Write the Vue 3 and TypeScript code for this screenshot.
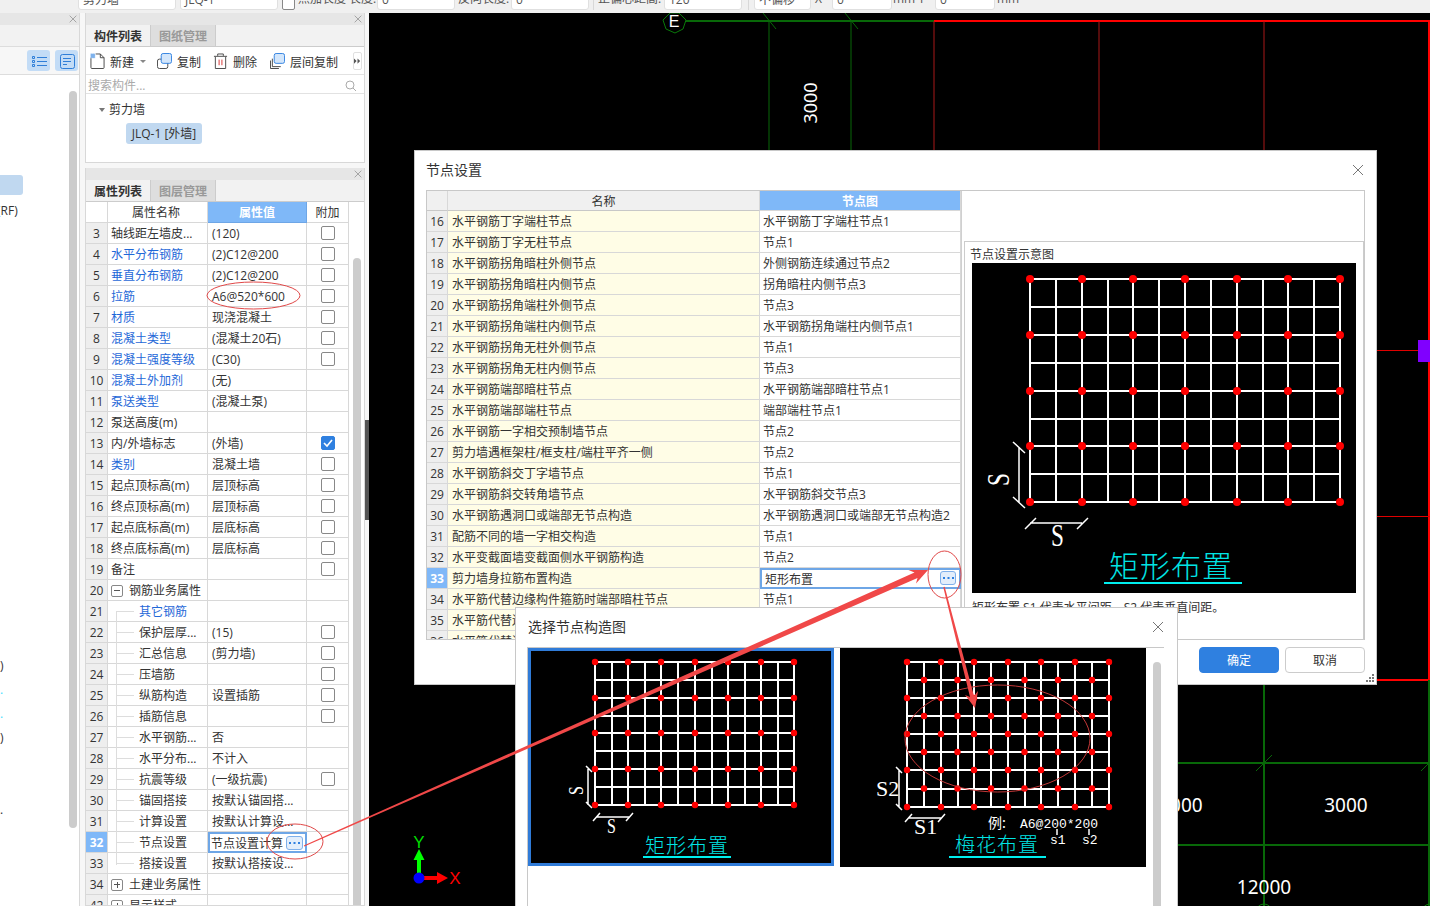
<script setup lang="ts">
interface BarItem {
  kind: 'input' | 'label' | 'check' | 'rule';
  text?: string;
  width: number;
  left: number;
}

interface PropRow {
  no: number;
  name: string;
  value?: string;
  link?: boolean;
  box?: boolean;
  checked?: boolean;
  child?: boolean;
  group?: 'open' | 'shut';
  active?: boolean;
}

const barItems: BarItem[] = [
  { kind: 'input', text: '剪力墙', width: 98, left: 78 },
  { kind: 'input', text: 'JLQ-1', width: 98, left: 4 },
  { kind: 'check', width: 13, left: 4 },
  { kind: 'label', text: '点加长度 长度:', width: 79, left: 3 },
  { kind: 'input', text: '0', width: 78, left: 0 },
  { kind: 'label', text: '反向长度:', width: 53, left: 3 },
  { kind: 'input', text: '0', width: 78, left: 0 },
  { kind: 'rule', width: 1, left: 4 },
  { kind: 'label', text: '正偏心距高:', width: 66, left: 4 },
  { kind: 'input', text: '120', width: 78, left: 0 },
  { kind: 'rule', width: 1, left: 6 },
  { kind: 'input', text: '不偏移', width: 57, left: 5 },
  { kind: 'label', text: 'X=', width: 17, left: 4 },
  { kind: 'input', text: '0', width: 60, left: 0 },
  { kind: 'label', text: 'mm Y=', width: 41, left: 1 },
  { kind: 'input', text: '0', width: 60, left: 1 },
  { kind: 'label', text: 'mm', width: 24, left: 2 },
];

const propRows: PropRow[] = [
  { no: 3, name: '轴线距左墙皮...', value: '(120)', box: true },
  { no: 4, name: '水平分布钢筋', value: '(2)C12@200', link: true, box: true },
  { no: 5, name: '垂直分布钢筋', value: '(2)C12@200', link: true, box: true },
  { no: 6, name: '拉筋', value: 'A6@520*600', link: true, box: true },
  { no: 7, name: '材质', value: '现浇混凝土', link: true, box: true },
  { no: 8, name: '混凝土类型', value: '(混凝土20石)', link: true, box: true },
  { no: 9, name: '混凝土强度等级', value: '(C30)', link: true, box: true },
  { no: 10, name: '混凝土外加剂', value: '(无)', link: true },
  { no: 11, name: '泵送类型', value: '(混凝土泵)', link: true },
  { no: 12, name: '泵送高度(m)' },
  { no: 13, name: '内/外墙标志', value: '(外墙)', box: true, checked: true },
  { no: 14, name: '类别', value: '混凝土墙', link: true, box: true },
  { no: 15, name: '起点顶标高(m)', value: '层顶标高', box: true },
  { no: 16, name: '终点顶标高(m)', value: '层顶标高', box: true },
  { no: 17, name: '起点底标高(m)', value: '层底标高', box: true },
  { no: 18, name: '终点底标高(m)', value: '层底标高', box: true },
  { no: 19, name: '备注', box: true },
  { no: 20, name: '钢筋业务属性', group: 'open' },
  { no: 21, name: '其它钢筋', link: true, child: true },
  { no: 22, name: '保护层厚...', value: '(15)', child: true, box: true },
  { no: 23, name: '汇总信息', value: '(剪力墙)', child: true, box: true },
  { no: 24, name: '压墙筋', child: true, box: true },
  { no: 25, name: '纵筋构造', value: '设置插筋', child: true, box: true },
  { no: 26, name: '插筋信息', child: true, box: true },
  { no: 27, name: '水平钢筋...', value: '否', child: true },
  { no: 28, name: '水平分布...', value: '不计入', child: true },
  { no: 29, name: '抗震等级', value: '(一级抗震)', child: true, box: true },
  { no: 30, name: '锚固搭接', value: '按默认锚固搭...', child: true },
  { no: 31, name: '计算设置', value: '按默认计算设...', child: true },
  { no: 32, name: '节点设置', value: '节点设置计算', child: true, active: true },
  { no: 33, name: '搭接设置', value: '按默认搭接设...', child: true },
  { no: 34, name: '土建业务属性', group: 'shut' },
  { no: 42, name: '显示样式', group: 'shut' },
];

const nodeRows: [number, string, string][] = [
  [16, '水平钢筋丁字端柱节点', '水平钢筋丁字端柱节点1'],
  [17, '水平钢筋丁字无柱节点', '节点1'],
  [18, '水平钢筋拐角暗柱外侧节点', '外侧钢筋连续通过节点2'],
  [19, '水平钢筋拐角暗柱内侧节点', '拐角暗柱内侧节点3'],
  [20, '水平钢筋拐角端柱外侧节点', '节点3'],
  [21, '水平钢筋拐角端柱内侧节点', '水平钢筋拐角端柱内侧节点1'],
  [22, '水平钢筋拐角无柱外侧节点', '节点1'],
  [23, '水平钢筋拐角无柱内侧节点', '节点3'],
  [24, '水平钢筋端部暗柱节点', '水平钢筋端部暗柱节点1'],
  [25, '水平钢筋端部端柱节点', '端部端柱节点1'],
  [26, '水平钢筋一字相交预制墙节点', '节点2'],
  [27, '剪力墙遇框架柱/框支柱/端柱平齐一侧', '节点2'],
  [28, '水平钢筋斜交丁字墙节点', '节点1'],
  [29, '水平钢筋斜交转角墙节点', '水平钢筋斜交节点3'],
  [30, '水平钢筋遇洞口或端部无节点构造', '水平钢筋遇洞口或端部无节点构造2'],
  [31, '配筋不同的墙一字相交构造', '节点1'],
  [32, '水平变截面墙变截面侧水平钢筋构造', '节点2'],
  [33, '剪力墙身拉筋布置构造', '矩形布置'],
  [34, '水平筋代替边缘构件箍筋时端部暗柱节点', '节点1'],
  [35, '水平筋代替边缘构件箍筋时端部端柱节点', '节点1'],
  [36, '水平筋代替边缘构件箍筋时端部节点', '节点1'],
];

// left panel leftovers, the rest of their text is hidden behind the scroll
const navMarks = [
  { text: ')', gap: 435, cls: 'dark' },
  { text: '.', gap: 4, cls: 'cyan' },
  { text: '.', gap: 4, cls: 'cyan' },
  { text: ')', gap: 4, cls: 'dark' },
  { text: '.', gap: 52, cls: 'dark' },
];

const midpoints = (a: number[]) => a.slice(1).map((v, i) => (a[i] + v) / 2);

const makeGrid = (xs: number[], ys: number[], stagger = false) => {
  const mx = midpoints(xs);
  const my = midpoints(ys);
  const dots: { x: number; y: number }[] = [];
  ys.forEach((y) => xs.forEach((x) => dots.push({ x, y })));
  if (stagger) my.forEach((y) => mx.forEach((x) => dots.push({ x, y })));
  return {
    left: xs[0],
    right: xs[xs.length - 1],
    top: ys[0],
    bottom: ys[ys.length - 1],
    cols: [...xs, ...mx].map(Math.round),
    rows: [...ys, ...my].map(Math.round),
    dots,
  };
};

const previewGrid = makeGrid(
  [1030, 1082, 1133, 1185, 1237, 1288, 1340],
  [279, 335, 391, 446, 502],
);
const rectGrid = makeGrid(
  [595, 628, 661, 695, 728, 761, 794],
  [662, 698, 733, 769, 805],
);
const plumGrid = makeGrid(
  [907, 941, 974, 1008, 1041, 1075, 1109],
  [662, 698, 734, 770, 807],
  true,
);
</script>

<template>
  <div class="app">
    <div class="topbar">
      <template v-for="(item, i) in barItems" :key="i">
        <span
          :class="'bar-' + item.kind"
          :style="{ width: item.width + 'px', marginLeft: item.left + 'px' }"
        >{{ item.text }}</span>
      </template>
    </div>

    <div class="workspace">
      <aside class="nav">
        <div class="strip">
          <svg class="x" viewBox="0 0 12 12"><path d="M1 1L11 11M11 1L1 11" /></svg>
        </div>
        <div class="nav-blank"></div>
        <div class="nav-tools">
          <span class="view-btn">
            <svg viewBox="0 0 22 22" width="22" height="22">
              <path class="blue-line" d="M4.500 6.500h2v2h-2zM4.500 10.500h2v2h-2zM4.500 14.500h2v2h-2zM9 7.500h10M9 11.500h10M9 15.500h10" />
            </svg>
          </span>
          <span class="view-btn">
            <svg viewBox="0 0 22 22" width="22" height="22">
              <rect class="blue-line" x="4.500" y="4.500" width="14" height="14" rx="2" />
              <path class="blue-line" d="M7 8.500h8M7 11.500h8M7 14.500h4" />
            </svg>
          </span>
        </div>
        <div class="nav-body">
          <div class="nav-picked"></div>
          <div class="nav-rf">(RF)</div>
          <div
            v-for="(mark, i) in navMarks"
            :key="i"
            class="nav-mark"
            :class="mark.cls"
            :style="{ marginTop: mark.gap + 'px' }"
          >{{ mark.text }}</div>
          <div class="nav-scroll"></div>
        </div>
      </aside>

      <div class="props-col">
        <section class="panel list-panel">
          <div class="strip">
            <svg class="x" viewBox="0 0 12 12"><path d="M1 1L11 11M11 1L1 11" /></svg>
          </div>
          <div class="tabs">
            <span class="tab on">构件列表</span>
            <span class="tab">图纸管理</span>
          </div>
          <div class="tools">
            <svg class="tool-ic first" viewBox="0 0 16 17">
              <path class="ink" d="M1 5v10.500a1 1 0 0 0 1 1h12a1 1 0 0 0 1-1V5l-4-4H6" />
              <path class="ink" d="M11 1v4h4" />
              <rect class="hatch" x="0.500" y="0.500" width="5" height="5" />
            </svg>
            <span class="tool-txt">新建</span>
            <span class="caret"></span>
            <svg class="tool-ic gap-a" viewBox="0 0 16 17">
              <rect class="ink" x="0.500" y="6.500" width="11" height="10" rx="2" />
              <rect class="front" x="4.500" y="0.500" width="11" height="10.500" rx="2" />
            </svg>
            <span class="tool-txt">复制</span>
            <svg class="tool-ic gap-b" viewBox="0 0 16 17">
              <path class="ink" d="M1 3.500h14M5 3V1h6v2M2.500 4v12.500h11V4" />
              <path class="red-bar" d="M6.500 7v6M9.500 7v6" />
            </svg>
            <span class="tool-txt">删除</span>
            <svg class="tool-ic gap-c" viewBox="0 0 16 17">
              <path class="ink" d="M0.500 8v8.500h9M2.500 6v8.500h9" />
              <rect class="front" x="4.500" y="0.500" width="11" height="10.500" rx="2" />
            </svg>
            <span class="tool-txt">层间复制</span>
            <span class="more">
              <svg viewBox="0 0 8 8" width="8" height="8"><path d="M0 1l3 3-3 3zM4 1l3 3-3 3z" /></svg>
            </span>
          </div>
          <div class="search">
            <span>搜索构件...</span>
            <svg viewBox="0 0 12 12" width="12" height="12">
              <circle cx="5" cy="5" r="4" />
              <path d="M8 8l3 3" />
            </svg>
          </div>
          <div class="tree">
            <div class="tree-head"><span class="tree-arrow"></span>剪力墙</div>
            <div class="tree-leaf">JLQ-1 [外墙]</div>
          </div>
        </section>

        <section class="panel prop-panel">
          <div class="strip">
            <svg class="x" viewBox="0 0 12 12"><path d="M1 1L11 11M11 1L1 11" /></svg>
          </div>
          <div class="tabs">
            <span class="tab on">属性列表</span>
            <span class="tab">图层管理</span>
          </div>
          <div class="p-row p-head">
            <span class="c-no"></span>
            <span class="c-name">属性名称</span>
            <span class="c-value">属性值</span>
            <span class="c-add">附加</span>
          </div>
          <div
            v-for="row in propRows"
            :key="row.no"
            class="p-row"
            :class="{ 'is-child': row.child, 'is-active': row.active }"
          >
            <span class="c-no">{{ row.no }}</span>
            <span class="c-name" :class="{ link: row.link }">
              <i v-if="row.group" class="fold" :class="row.group"></i>
              {{ row.name }}
            </span>
            <span class="c-value">
              {{ row.value }}
              <i v-if="row.active" class="dots-btn">
                <svg viewBox="0 0 13 3" width="13" height="3"><path d="M1 0h2v2H1zM5.500 0h2v2h-2zM10 0h2v2h-2z" /></svg>
              </i>
            </span>
            <span class="c-add">
              <i v-if="row.box" class="box" :class="{ checked: row.checked }">
                <svg v-if="row.checked" viewBox="0 0 14 14" width="14" height="14">
                  <path d="M3 7l3 3 5-6" />
                </svg>
              </i>
            </span>
          </div>
          <div class="prop-scroll"></div>
        </section>
      </div>

      <div class="splitter"></div>

      <main class="canvas">
        <svg class="cad" viewBox="369 13 1061 893" width="1061" height="893">
          <path class="g-thick" d="M686 21H934" />
          <path class="r-thick" d="M934 21H1430M1429 21V680M1177 680H1429" />
          <path class="r-mid" d="M1377 350.500H1418M1377 516.500H1430" />
          <path class="r-thin" d="M934 21V150M1099 21V150M1264 21V150" />
          <path class="g-thin" d="M769 21V150M851 21V150M763 13L776 29M845 13L858 29" />
          <path class="g-thick" d="M1177 763H1430M1177 845H1430M1264 684V906M1429 680V906" />
          <path class="g-thin" d="M1256 771L1272 755M1421 771L1430 762" />
          <polygon class="g-line" points="670,13 679,13 686,20 683,29 675,33 666,29 663,20" />
          <text class="e-mark" x="674" y="27">E</text>
          <circle class="g-line" cx="1264" cy="912" r="8" />
          <circle class="g-line" cx="1430" cy="912" r="8" />
          <rect class="purple" x="1418" y="340" width="12" height="22" />
          <text class="dim turned" transform="translate(817 103) rotate(-90)">3000</text>
          <text class="dim" x="1181" y="812">3000</text>
          <text class="dim" x="1346" y="812">3000</text>
          <text class="dim" x="1264" y="894">12000</text>
          <path class="axis-y" d="M417 873V860H413.500L419 849L424.500 860H421V873Z" />
          <path class="axis-x" d="M423 876H437V872L448 878L437 884V880H423Z" />
          <circle class="axis-o" cx="419" cy="878" r="5.500" />
          <text class="axis-t y" x="419" y="848">Y</text>
          <text class="axis-t xx" x="455" y="884">X</text>
        </svg>
      </main>
    </div>

    <div class="dialog node-dialog">
      <div class="dlg-title">
        <span>节点设置</span>
        <svg class="x big" viewBox="0 0 12 12"><path d="M1 1L11 11M11 1L1 11" /></svg>
      </div>
      <div class="dlg-body">
        <div class="node-table">
          <div class="n-row n-head">
            <span class="n-no"></span>
            <span class="n-name">名称</span>
            <span class="n-val">节点图</span>
          </div>
          <div v-for="row in nodeRows" :key="row[0]" class="n-row" :class="{ 'is-active': row[0] === 33 }">
            <span class="n-no">{{ row[0] }}</span>
            <span class="n-name">{{ row[1] }}</span>
            <span class="n-val">
              {{ row[2] }}
              <i v-if="row[0] === 33" class="dots-btn">
                <svg viewBox="0 0 13 3" width="13" height="3"><path d="M1 0h2v2H1zM5.500 0h2v2h-2zM10 0h2v2h-2z" /></svg>
              </i>
            </span>
          </div>
        </div>
        <div class="preview">
          <div class="preview-title">节点设置示意图</div>
          <svg class="pic" viewBox="972 263 384 330" width="384" height="330">
            <rect x="972" y="263" width="384" height="330" />
            <path
              v-for="c in previewGrid.cols"
              :key="c"
              class="wire"
              :d="`M${c} ${previewGrid.top}V${previewGrid.bottom}`"
            />
            <path
              v-for="r in previewGrid.rows"
              :key="r"
              class="wire"
              :d="`M${previewGrid.left} ${r}H${previewGrid.right}`"
            />
            <circle v-for="(d, i) in previewGrid.dots" :key="i" class="dot" :cx="d.x" :cy="d.y" r="4" />
            <path class="dim-line" d="M1019 447V502M1013 442L1025 453M1013 497L1025 508M1030 523H1082M1025 529L1036 518M1077 529L1088 518" />
            <text class="cad-letter" transform="translate(1009 486) rotate(-90) scale(0.75 1)">S</text>
            <text class="cad-letter" transform="translate(1051 546) scale(0.75 1)">S</text>
            <text class="pic-name" x="1171" y="577">矩形布置</text>
            <path class="pic-rule" d="M1104 583H1242" />
          </svg>
          <p class="preview-note">矩形布置 S1 代表水平间距，S2 代表垂直间距。</p>
        </div>
      </div>
      <div class="dlg-foot">
        <button class="btn primary">确定</button>
        <button class="btn">取消</button>
      </div>
      <svg class="grip" viewBox="0 0 8 8" width="8" height="8">
        <path d="M6 0h2v2H6zM3 3h2v2H3zM6 3h2v2H6zM0 6h2v2H0zM3 6h2v2H3zM6 6h2v2H6z" />
      </svg>
    </div>

    <div class="dialog pick-dialog">
      <div class="pick-title">选择节点构造图</div>
      <svg class="x big pick-x" viewBox="0 0 12 12"><path d="M1 1L11 11M11 1L1 11" /></svg>
      <div class="gallery">
        <div class="thumb picked">
          <svg class="pic" viewBox="528 648 306 218" width="306" height="218">
            <rect x="528" y="648" width="306" height="218" />
            <path v-for="c in rectGrid.cols" :key="c" class="wire" :d="`M${c} ${rectGrid.top}V${rectGrid.bottom}`" />
            <path v-for="r in rectGrid.rows" :key="r" class="wire" :d="`M${rectGrid.left} ${r}H${rectGrid.right}`" />
            <circle v-for="(d, i) in rectGrid.dots" :key="i" class="dot" :cx="d.x" :cy="d.y" r="3.200" />
            <path class="dim-line" d="M588 769V805M586 766L592 772M586 802L592 808M596 817H629M593 821L600 813M626 821L633 813" />
            <text class="cad-letter sm" transform="translate(583 795) rotate(-90) scale(0.8 1)">S</text>
            <text class="cad-letter sm" transform="translate(607 833) scale(0.8 1)">S</text>
            <text class="pic-name sm" x="687" y="853">矩形布置</text>
            <path class="pic-rule" d="M643 857H731" />
          </svg>
        </div>
        <div class="thumb">
          <svg class="pic" viewBox="840 648 306 219" width="306" height="219">
            <rect x="840" y="648" width="306" height="219" />
            <path v-for="c in plumGrid.cols" :key="c" class="wire" :d="`M${c} ${plumGrid.top}V${plumGrid.bottom}`" />
            <path v-for="r in plumGrid.rows" :key="r" class="wire" :d="`M${plumGrid.left} ${r}H${plumGrid.right}`" />
            <circle v-for="(d, i) in plumGrid.dots" :key="i" class="dot" :cx="d.x" :cy="d.y" r="3.200" />
            <path class="dim-line" d="M899 770V807M896 767L902 773M896 804L902 810M908 818H941M905 822L912 814M938 822L945 814M1057 829V835M1089 829V835" />
            <text class="cad-letter mid" x="876" y="796">S2</text>
            <text class="cad-letter mid" x="914" y="834">S1</text>
            <text class="plum-cn" x="988" y="828">例:</text>
            <text class="plum-mono" x="1020" y="828">A6@200*200</text>
            <text class="plum-mono" x="1050" y="844">s1</text>
            <text class="plum-mono" x="1082" y="844">s2</text>
            <text class="pic-name sm" x="997" y="852">梅花布置</text>
            <path class="pic-rule" d="M949 857H1046" />
          </svg>
        </div>
      </div>
      <div class="pick-scroll"></div>
    </div>

    <!-- hand drawn markup from the person who took the screenshot -->
    <svg class="markup" viewBox="0 0 1430 906" width="1430" height="906">
      <ellipse cx="253.500" cy="295.500" rx="46.500" ry="13.500" />
      <ellipse cx="295" cy="841.500" rx="28" ry="17.500" />
      <ellipse cx="944.500" cy="574.500" rx="16.500" ry="23.500" />
      <ellipse class="dim-red" cx="997.500" cy="738.500" rx="92.500" ry="53.500" />
      <polygon points="304.200,846.600 917.500,578 916,583.500 928,570 908.500,570 914.500,572.500 303.800,845.400" />
      <polygon points="943.300,587.200 970,697 965,695 975,708 978,691 974,696 944.700,586.800" />
    </svg>
  </div>
</template>

<style>
html,
body {
  margin: 0;
  padding: 0;
  background: #fff;
}
</style>

<style scoped>
* {
  box-sizing: border-box;
}

.app {
  position: relative;
  width: 1430px;
  height: 906px;
  overflow: hidden;
  display: flex;
  flex-direction: column;
  background: #f7f7f7;
  color: #333;
  font: 12px/20px "Open Sans", "Noto Sans CJK SC", sans-serif;
}

.topbar {
  height: 13px;
  flex-shrink: 0;
  display: flex;
  align-items: flex-end;
  padding-bottom: 3px;
  background: #f0f0f0;
  overflow: visible;
  color: #555;
  white-space: nowrap;
}

.bar-input {
  height: 22px;
  line-height: 22px;
  padding: 0 4px;
  flex-shrink: 0;
  background: #fff;
  border: 1px solid #e0e0e0;
  border-radius: 3px;
}

.bar-label {
  height: 22px;
  line-height: 22px;
  flex-shrink: 0;
}

.bar-check {
  height: 13px;
  flex-shrink: 0;
  border: 1px solid #888;
  border-radius: 2px;
  background: #fff;
}

.bar-rule {
  height: 13px;
  flex-shrink: 0;
  background: #d8d8d8;
}

.workspace {
  flex: 1;
  display: flex;
  min-height: 0;
}

.strip {
  height: 12px;
  flex-shrink: 0;
  display: flex;
  align-items: center;
  justify-content: flex-end;
  padding-right: 2px;
  background: #e6e6e6;
}

.x {
  width: 8px;
  height: 8px;
  fill: none;
  stroke: #999;
  stroke-width: 1.300;
}

.x.big {
  width: 12px;
  height: 12px;
  stroke: #777;
  stroke-width: 1;
}

.nav {
  width: 80px;
  margin-right: 5px;
  flex-shrink: 0;
  display: flex;
  flex-direction: column;
  background: #fff;
  border-right: 1px solid #d8d8d8;
}

.nav-blank {
  height: 22px;
  background: #f2f2f2;
  border-bottom: 1px solid #ddd;
}

.nav-tools {
  height: 28px;
  display: flex;
  align-items: center;
  justify-content: flex-end;
  gap: 5px;
  padding-right: 1px;
  background: #f7f7f7;
  border-bottom: 1px solid #ddd;
}

.view-btn {
  width: 23px;
  height: 21px;
  display: flex;
  align-items: center;
  justify-content: center;
  background: #c3dcf6;
  border-radius: 3px;
}

.blue-line {
  fill: none;
  stroke: #2f7ed8;
  stroke-width: 1;
}

.nav-body {
  position: relative;
  flex: 1;
  padding-top: 100px;
  background: #fff;
}

.nav-picked {
  width: 23px;
  height: 20px;
  background: #c0d8f0;
  border-radius: 0 3px 3px 0;
}

.nav-rf {
  margin: 6px 0 0 -3px;
}

.nav-mark {
  height: 20px;
  line-height: 20px;
}

.nav-mark.cyan {
  color: #44ddff;
}

.nav-scroll {
  position: absolute;
  top: 16px;
  left: 69px;
  width: 8px;
  height: 737px;
  background: #ccc;
  border-radius: 4px;
}

.props-col {
  width: 280px;
  flex-shrink: 0;
  display: flex;
  flex-direction: column;
  gap: 5px;
}

.panel {
  position: relative;
  background: #fff;
  border: 1px solid #d8d8d8;
  border-top: 0;
}

.list-panel {
  height: 150px;
}

.prop-panel {
  flex: 1;
  min-height: 0;
  overflow: hidden;
}

.tabs {
  height: 22px;
  display: flex;
  background: #f2f2f2;
  border-bottom: 1px solid #ccc;
}

.tab {
  width: 65px;
  height: 22px;
  text-align: center;
  line-height: 24px;
  font-weight: 700;
  color: #999;
  background: #dedede;
  border: 1px solid #ccc;
  border-width: 0 1px 1px 0;
}

.tab.on {
  color: #333;
  background: #f2f2f2;
}

.tools {
  height: 28px;
  display: flex;
  align-items: center;
  border-bottom: 1px solid #e2e2e2;
}

.tool-ic {
  width: 15px;
  height: 16px;
  flex-shrink: 0;
  margin-right: 5px;
}

.tool-ic.first {
  margin-left: 4px;
}

.tool-ic.gap-a {
  margin-left: 11px;
}

.tool-ic.gap-b {
  margin-left: 12px;
}

.tool-ic.gap-c {
  margin-left: 13px;
}

.ink {
  fill: none;
  stroke: #444;
  stroke-width: 1;
}

.hatch {
  fill: #7fb2ec;
  stroke: #fff;
  stroke-width: 0.500;
  stroke-dasharray: 1 1;
}

.front {
  fill: #d3e6fb;
  stroke: #2f80e0;
  stroke-width: 1;
}

.red-bar {
  fill: none;
  stroke: #d83030;
  stroke-width: 1;
}

.tool-txt {
  flex-shrink: 0;
  padding-top: 4px;
}

.caret {
  width: 0;
  height: 0;
  margin: 1px 0 0 6px;
  border: 3px solid transparent;
  border-top: 3px solid #888;
  border-bottom: 0;
}

.more {
  width: 9px;
  height: 18px;
  margin-left: 15px;
  display: flex;
  align-items: center;
  justify-content: center;
  background: #fff;
  border: 1px solid #e0e0e0;
  border-radius: 2px;
}

.more svg {
  fill: #555;
}

.search {
  height: 19px;
  display: flex;
  align-items: center;
  justify-content: space-between;
  padding: 3px 7px 0 2px;
  color: #aaa;
  border-bottom: 1px solid #e2e2e2;
}

.search svg {
  fill: none;
  stroke: #aaa;
  stroke-width: 1;
}

.tree {
  padding: 6px 0 0 13px;
}

.tree-head {
  height: 20px;
  display: flex;
  align-items: center;
  color: #333;
}

.tree-arrow {
  width: 0;
  height: 0;
  margin-right: 4px;
  border: 3.500px solid transparent;
  border-top: 4px solid #777;
  border-bottom: 0;
}

.tree-leaf {
  width: 76px;
  height: 21px;
  margin: 3px 0 0 27px;
  line-height: 22px;
  text-align: center;
  white-space: nowrap;
  background: #c0d8f0;
  border-radius: 3px;
}

.p-row {
  position: relative;
  height: 21px;
  width: 263px;
  display: grid;
  grid-template-columns: 22px 100px 99px 42px;
  line-height: 22px;
  white-space: nowrap;
}

.p-row > span {
  border: 1px solid #d8d8d8;
  border-width: 0 1px 1px 0;
  overflow: hidden;
}

.c-no {
  text-align: center;
  background: #eee;
}

.c-name {
  padding-left: 3px;
}

.c-value {
  padding-left: 4px;
  position: relative;
}

.c-add {
  display: flex;
  align-items: center;
  justify-content: center;
}

.link {
  color: #1f68d8;
}

.p-head .c-no {
  background: #fff;
}

.p-head .c-name {
  text-align: center;
  padding: 0 3px 0 0;
}

.p-head .c-value {
  text-align: center;
  padding: 0;
  color: #fff;
  font-weight: 700;
  background: #7fb8f8;
  border-color: #6ea6e6;
}

.p-head .c-add {
  color: #333;
  padding-top: 2px;
}

.is-child .c-name {
  padding-left: 31px;
}

.is-child::before {
  content: "";
  position: absolute;
  left: 30px;
  top: 10px;
  width: 17px;
  height: 21px;
  border-top: 1px solid #ddd;
  border-left: 1px solid #ddd;
}

.is-child:nth-last-child(4)::before {
  height: 1px;
}

.is-active .c-no,
.is-active .n-no {
  color: #fff;
  font-weight: 700;
  background: #7fb8f8;
}

.is-active .c-value {
  border: 2px solid #6ea6e6;
  padding-left: 1px;
  line-height: 20px;
}

.dots-btn {
  position: absolute;
  top: 2px;
  right: 2px;
  width: 17px;
  height: 14px;
  display: flex;
  align-items: center;
  justify-content: center;
  background: #e3eefb;
  border: 1px solid #7fb0ea;
  border-radius: 3px;
}

.dots-btn svg {
  fill: #2f80e0;
}

.box {
  width: 14px;
  height: 14px;
  display: block;
  background: #fff;
  border: 1px solid #888;
  border-radius: 2px;
}

.box.checked {
  border-color: #2f80e0;
  background: #2f80e0;
}

.box.checked svg {
  display: block;
  margin: -1px;
  fill: none;
  stroke: #fff;
  stroke-width: 1.600;
}

.fold {
  position: relative;
  display: inline-block;
  width: 12px;
  height: 12px;
  margin-right: 3px;
  vertical-align: -2px;
  background: #fff;
  border: 1px solid #888;
  border-radius: 2px;
}

.fold::before {
  content: "";
  position: absolute;
  left: 2px;
  top: 4px;
  width: 6px;
  height: 1px;
  background: #555;
}

.fold.shut::after {
  content: "";
  position: absolute;
  left: 4.500px;
  top: 2px;
  width: 1px;
  height: 6px;
  background: #555;
}

.prop-scroll {
  position: absolute;
  top: 90px;
  left: 267px;
  width: 8px;
  height: 660px;
  background: #ccc;
  border-radius: 4px 4px 0 0;
}

.splitter {
  width: 4px;
  height: 100px;
  flex-shrink: 0;
  margin-top: 407px;
  background: #555;
}

.canvas {
  flex: 1;
  position: relative;
  background: #000;
  margin-left: 0;
}

.cad {
  display: block;
  background: #000;
}

.g-thick {
  fill: none;
  stroke: #086808;
  stroke-width: 2;
}

.g-thin {
  fill: none;
  stroke: #086808;
  stroke-width: 1;
}

.g-line {
  fill: none;
  stroke: #0a7a0a;
  stroke-width: 1;
}

.r-thick {
  fill: none;
  stroke: #f00;
  stroke-width: 2;
}

.r-mid {
  fill: none;
  stroke: #e00000;
  stroke-width: 1;
}

.r-thin {
  fill: none;
  stroke: #a81818;
  stroke-width: 1;
}

.purple {
  fill: #8000ff;
}

.e-mark {
  font-family: "Liberation Sans", sans-serif;
  font-size: 16px;
  fill: #fff;
  text-anchor: middle;
}

.dim {
  font-family: "Noto Sans", sans-serif;
  font-size: 19px;
  fill: #fff;
  text-anchor: middle;
}

.dim.turned {
  font-size: 18px;
}

.axis-y {
  fill: #00ff00;
}

.axis-x {
  fill: #f00;
}

.axis-o {
  fill: #0000ff;
}

.axis-t {
  font-family: "Liberation Sans", sans-serif;
  font-size: 17px;
  text-anchor: middle;
}

.axis-t.y {
  fill: #00dd00;
}

.axis-t.xx {
  fill: #f00;
}

.dialog {
  position: absolute;
  background: #fff;
  border: 1px solid #c8c8c8;
}

.node-dialog {
  left: 414px;
  top: 150px;
  width: 963px;
  height: 535px;
  display: flex;
  flex-direction: column;
}

.dlg-title {
  height: 39px;
  flex-shrink: 0;
  display: flex;
  align-items: center;
  justify-content: space-between;
  padding: 0 12px 1px 11px;
  font-size: 14px;
}

.dlg-body {
  height: 450px;
  width: 939px;
  margin-left: 11px;
  flex-shrink: 0;
  display: flex;
  border: 1px solid #c8c8c8;
  border-top-width: 1px;
}

.node-table {
  width: 535px;
  height: 448px;
  flex-shrink: 0;
  overflow: hidden;
  border-right: 1px solid #d0d0d0;
}

.n-row {
  position: relative;
  height: 21px;
  display: grid;
  grid-template-columns: 21px 312px 201px;
  line-height: 22px;
  white-space: nowrap;
}

.n-row > span {
  overflow: hidden;
  border: 1px solid #d8d8d8;
  border-width: 0 1px 1px 0;
}

.n-no {
  text-align: center;
  background: #eee;
}

.n-name {
  padding-left: 4px;
  background: #fffde6;
}

.n-val {
  position: relative;
  padding-left: 3px;
}

.n-head {
  height: 20px;
}

.n-head .n-name {
  padding: 0;
  text-align: center;
  background: #f0f0f0;
  border-bottom-color: #c8c8c8;
}

.n-head .n-no {
  background: #f0f0f0;
  border-bottom-color: #c8c8c8;
}

.n-head .n-val {
  padding: 0;
  text-align: center;
  color: #fff;
  font-weight: 700;
  background: #7fb8f8;
}

.n-row.is-active .n-val {
  border: 2px solid #6ea6e6;
  padding-left: 3px;
  line-height: 19px;
}

.n-row.is-active .dots-btn {
  top: 1px;
  right: 3px;
  width: 16px;
}

.preview {
  width: 400px;
  height: 399px;
  margin: 50px 0 0 2px;
  flex-shrink: 0;
  padding: 0 7px;
  border: 1px solid #ccc;
  border-bottom: 0;
  border-right: 1px solid #ccc;
}

.preview-title {
  height: 21px;
  line-height: 26px;
  margin-left: -2px;
}

.pic {
  display: block;
}

.pic rect {
  fill: #000;
}

.wire {
  fill: none;
  stroke: #fff;
  stroke-width: 2;
  shape-rendering: crispEdges;
}

.dot {
  fill: #f00;
}

.dim-line {
  fill: none;
  stroke: #fff;
  stroke-width: 1.500;
}

.cad-letter {
  font-family: "Liberation Serif", serif;
  font-size: 31px;
  fill: #fff;
}

.cad-letter.sm {
  font-size: 20px;
}

.cad-letter.mid {
  font-size: 22px;
}

.pic-name {
  font-family: "Noto Sans CJK SC", sans-serif;
  font-size: 30px;
  font-weight: 300;
  letter-spacing: 1px;
  fill: #00e5e5;
  text-anchor: middle;
}

.pic-name.sm {
  font-size: 20px;
}

.pic-rule {
  fill: none;
  stroke: #00eeee;
  stroke-width: 2;
}

.plum-cn {
  font-family: "Noto Sans CJK SC", sans-serif;
  font-size: 14px;
  fill: #fff;
}

.plum-mono {
  font-family: "Liberation Mono", monospace;
  font-size: 13px;
  fill: #fff;
}

.preview-note {
  margin: 5px 0 0;
  line-height: 20px;
}

.dlg-foot {
  display: flex;
  justify-content: flex-end;
  gap: 6px;
  padding: 7px 11px 0 0;
}

.btn {
  width: 80px;
  height: 26px;
  padding: 2px 0 0;
  font: inherit;
  color: #333;
  background: #fff;
  border: 1px solid #ccc;
  border-radius: 4px;
}

.btn.primary {
  color: #fff;
  background: #2f80e0;
  border-color: #2f80e0;
}

.grip {
  position: absolute;
  right: 2px;
  bottom: 2px;
  fill: #777;
}

.pick-dialog {
  left: 515px;
  top: 607px;
  width: 663px;
  height: 310px;
}

.pick-title {
  height: 39px;
  padding-left: 12px;
  font-size: 14px;
  line-height: 38px;
}

.pick-x {
  position: absolute;
  top: 13px;
  right: 13px;
}

.gallery {
  width: 637px;
  height: 270px;
  margin-left: 11px;
  display: flex;
  gap: 6px;
  border-top: 1px solid #c8c8c8;
  border-left: 1px solid #c8c8c8;
}

.thumb {
  position: relative;
  width: 306px;
  flex-shrink: 0;
  align-self: flex-start;
}

.thumb.picked::after {
  content: "";
  position: absolute;
  inset: 0;
  border: 3px solid #2f7bd8;
  box-shadow: inset 0 0 0 1px #000;
}

.pick-scroll {
  position: absolute;
  top: 54px;
  left: 637px;
  width: 8px;
  height: 260px;
  background: #ccc;
  border-radius: 4px 4px 0 0;
}

.markup {
  position: absolute;
  inset: 0;
  pointer-events: none;
}

.markup ellipse {
  fill: none;
  stroke: #e04848;
  stroke-width: 1;
}

.markup ellipse.dim-red {
  stroke: #c43838;
}

.markup polygon {
  fill: #f04848;
}
</style>
